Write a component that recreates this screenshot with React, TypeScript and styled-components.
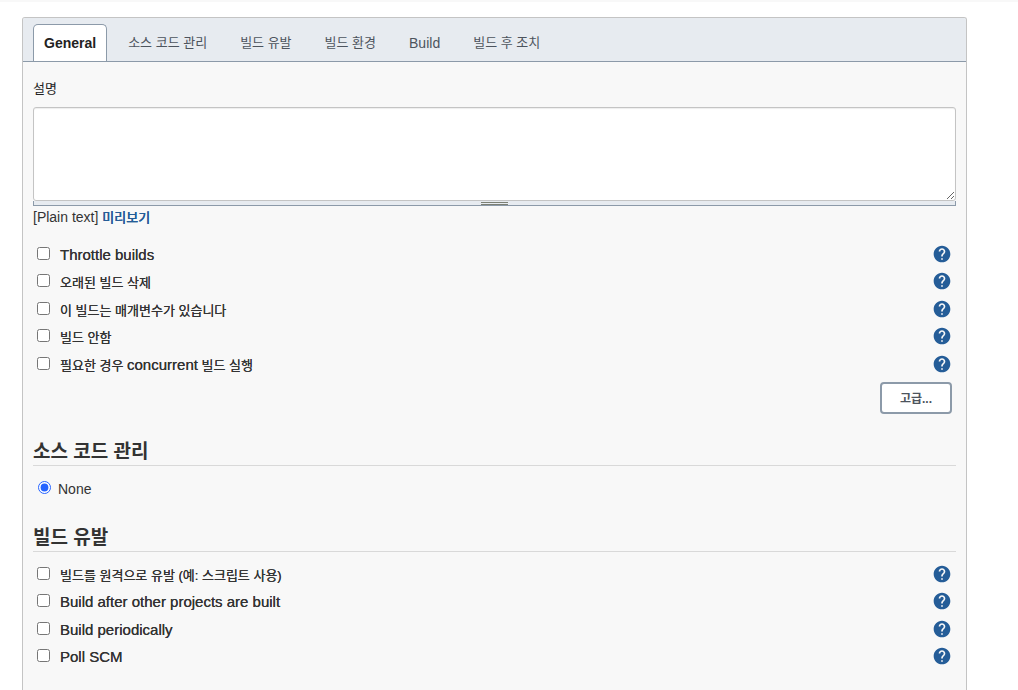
import React, { useState } from "react";
import styled, { createGlobalStyle } from "styled-components";
import { MdHelp } from "react-icons/md";

const GlobalStyle = createGlobalStyle`
  * { box-sizing: border-box; }
  body {
    margin: 0;
    background: #fff;
    color: #333;
    font-family: "Liberation Sans", "Noto Sans CJK KR", sans-serif;
    font-size: 14px;
    line-height: 20px;
  }
`;

const Page = styled.div`
  display: flex;
  flex-direction: column;
  min-height: 100vh;
  border-top: 2px solid #f8f8f8;
`;

const Panel = styled.main`
  flex: 1;
  margin: 15px 51px 0 22px;
  border: 1px solid #c4c4c4;
  border-bottom: 0;
  border-radius: 3px 3px 0 0;
  background: #f8f8f8;
`;

const TabBar = styled.nav`
  display: flex;
  align-items: flex-end;
  gap: 9px;
  height: 44px;
  padding: 0 10px;
  background: #e7ebf0;
  border-bottom: 1px solid #8c9aa9;
  border-radius: 2px 2px 0 0;
`;

const Tab = styled.button<{ $active: boolean; $korean: boolean }>`
  height: 37px;
  padding: 0 ${(p) => (p.$active ? 10 : 11)}px;
  border: 1px solid ${(p) => (p.$active ? "#8c9aa9" : "transparent")};
  border-bottom: 0;
  border-radius: 5px 5px 0 0;
  background: ${(p) => (p.$active ? "#fff" : "transparent")};
  color: ${(p) => (p.$active ? "#222" : "#4d545d")};
  font-family: inherit;
  font-size: ${(p) => (p.$korean ? 13 : 14)}px;
  font-weight: ${(p) => (p.$active ? 700 : 400)};
  line-height: 20px;
  white-space: nowrap;
`;

const Content = styled.div`
  padding: 17px 10px 24px;
`;

const Korean = styled.span`
  font-size: 13px;
`;

const FieldLabel = styled.label`
  display: block;
  margin-bottom: 8px;
  color: #222;
  font-size: 13px;
`;

const Description = styled.textarea`
  display: block;
  width: 100%;
  height: 94px;
  padding: 6px;
  border: 1px solid #c4c4c4;
  border-radius: 3px;
  background: #fff;
  box-shadow: inset 0 1px 1px #eee;
  font: inherit;
  resize: vertical;
`;

const ResizeBar = styled.div`
  display: flex;
  justify-content: center;
  height: 5px;
  padding-top: 1px;
  border: 1px solid #8c9aa9;
  border-top: 0;
  background: #e7ebf0;
`;

const Grip = styled.div`
  width: 27px;
  height: 3px;
  border: 1px solid #7c8074;
  border-width: 1px 0;
`;

const Format = styled.div`
  margin: 1px 0 16px;
`;

const PreviewLink = styled.a`
  color: #255d98;
  font-size: 13px;
  font-weight: 500;
  text-shadow: 0 0 0 currentColor;
  text-decoration: none;
`;

const OptionList = styled.div`
  display: flex;
  flex-direction: column;
`;

const Option = styled.div`
  display: flex;
  align-items: flex-start;
  height: 27px;
  padding: 0 4px;

  &:nth-child(even) {
    height: 28px;
  }
`;

const RadioRow = styled.div`
  display: flex;
  height: 22px;
  padding: 0 4px;
`;

const Choice = styled.label`
  display: flex;
  align-items: flex-start;
  flex: 1;
`;

const Checkbox = styled.input`
  width: 13px;
  height: 13px;
  margin: 3px 10px 0 0;
`;

const Radio = styled.input`
  width: 13px;
  height: 13px;
  margin: 3px 7px 0 1px;
  accent-color: #2563ff;
`;

const OptionText = styled.span`
  padding-top: 1px;
  font-size: 15px;
  text-shadow: 0 0 0 currentColor;
`;

const RadioText = styled.span`
  padding-top: 1px;
`;

const HelpButton = styled.button`
  display: block;
  width: 20px;
  height: 20px;
  padding: 0;
  border: 0;
  background: none;
  color: #255d98;

  svg {
    display: block;
  }
`;

const Actions = styled.div`
  display: flex;
  justify-content: flex-end;
  padding: 1px 4px 0;
`;

const AdvancedButton = styled.button`
  width: 72px;
  height: 32px;
  padding: 0 0 2px;
  border: 2px solid #8c9aa9;
  border-radius: 4px;
  background: #fff;
  color: #4d545d;
  font-family: inherit;
  font-size: 12px;
  font-weight: 700;
`;

const SectionTitle = styled.h2`
  margin: 26px 0 12px;
  padding-bottom: 1px;
  border-bottom: 1px solid #d9d9d9;
  font-size: 19px;
  font-weight: 700;
  line-height: 24px;
`;

const hangul = /[\uac00-\ud7a3]/;

/* Hangul runs, with the punctuation around them, take the smaller size. */
function MixedText({ text }: { text: string }) {
  if (!hangul.test(text)) return <>{text}</>;
  return (
    <>
      {text.split(/([A-Za-z]+)/).map((part, i) =>
        i % 2 ? part : <Korean key={i}>{part}</Korean>
      )}
    </>
  );
}

function OptionRow({ text }: { text: string }) {
  return (
    <Option>
      <Choice>
        <Checkbox type="checkbox" />
        <OptionText>
          <MixedText text={text} />
        </OptionText>
      </Choice>
      <HelpButton type="button" aria-label="Help">
        <MdHelp size={20} />
      </HelpButton>
    </Option>
  );
}

const tabs = ["General", "소스 코드 관리", "빌드 유발", "빌드 환경", "Build", "빌드 후 조치"];

const generalOptions = [
  "Throttle builds",
  "오래된 빌드 삭제",
  "이 빌드는 매개변수가 있습니다",
  "빌드 안함",
  "필요한 경우 concurrent 빌드 실행",
];

const triggerOptions = [
  "빌드를 원격으로 유발 (예: 스크립트 사용)",
  "Build after other projects are built",
  "Build periodically",
  "Poll SCM",
];

export default function App() {
  const [active, setActive] = useState("General");
  return (
    <>
      <GlobalStyle />
      <Page>
        <Panel>
          <TabBar>
            {tabs.map((tab) => (
              <Tab
                key={tab}
                type="button"
                $active={tab === active}
                $korean={hangul.test(tab)}
                onClick={() => setActive(tab)}
              >
                {tab}
              </Tab>
            ))}
          </TabBar>
          <Content>
            <FieldLabel htmlFor="description">설명</FieldLabel>
            <Description id="description" />
            <ResizeBar>
              <Grip />
            </ResizeBar>
            <Format>
              [Plain text] <PreviewLink href="#preview">미리보기</PreviewLink>
            </Format>
            <OptionList>
              {generalOptions.map((text) => (
                <OptionRow key={text} text={text} />
              ))}
            </OptionList>
            <Actions>
              <AdvancedButton type="button">고급...</AdvancedButton>
            </Actions>

            <SectionTitle>소스 코드 관리</SectionTitle>
            <RadioRow>
              <Choice>
                <Radio type="radio" name="scm" defaultChecked />
                <RadioText>None</RadioText>
              </Choice>
            </RadioRow>

            <SectionTitle>빌드 유발</SectionTitle>
            <OptionList>
              {triggerOptions.map((text) => (
                <OptionRow key={text} text={text} />
              ))}
            </OptionList>
          </Content>
        </Panel>
      </Page>
    </>
  );
}
